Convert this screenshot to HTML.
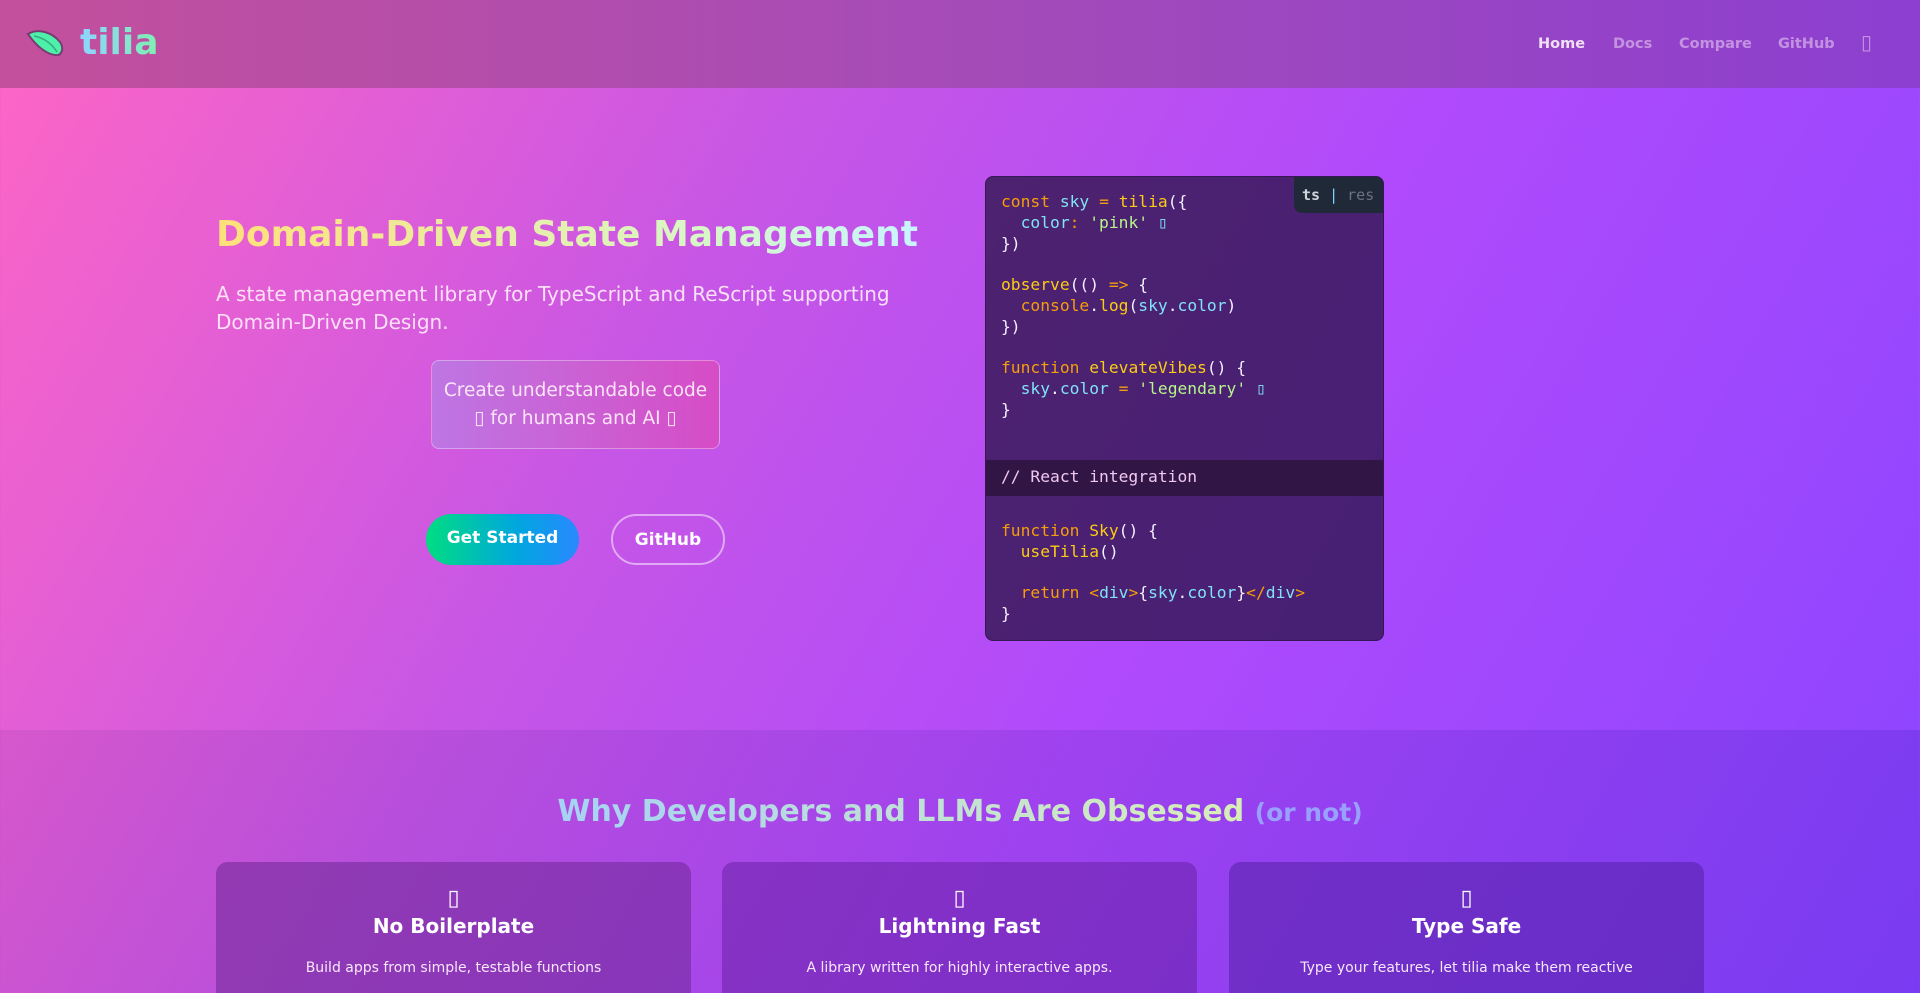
<!DOCTYPE html>
<html><head><meta charset="utf-8"><style>
*{margin:0;padding:0;box-sizing:border-box}
html,body{width:1920px;height:993px;overflow:hidden}
body{font-family:"DejaVu Sans","Liberation Sans",sans-serif;background:linear-gradient(120deg,#ff66c4 0%,#c656e6 35%,#b04afc 60%,#8a45ff 100%);position:relative;color:#fff}
header{position:absolute;left:0;top:0;width:1920px;height:88px;background:linear-gradient(90deg,#c3509c 0%,#a54bb8 50%,#8c3fd0 100%);}
.logo{position:absolute;left:26px;top:28px}
.brand{position:absolute;left:80px;top:22px;font-size:36px;font-weight:bold;background:linear-gradient(90deg,#8fd3ff,#7ff0b0);-webkit-background-clip:text;color:transparent}
nav a{position:absolute;top:36px;font-size:14.5px;font-weight:bold;color:rgba(230,200,240,.6);text-decoration:none}
h1{position:absolute;left:216px;top:214px;font-size:36px;font-weight:bold;white-space:nowrap;background:linear-gradient(90deg,#ffe07a,#d8f7c8 70%,#c8f4ff);-webkit-background-clip:text;color:transparent}
.sub{position:absolute;left:216px;top:280px;width:700px;font-size:20px;line-height:28px;color:rgba(255,235,250,.92)}
.box{position:absolute;left:431px;top:360px;width:289px;height:89px;border:1px solid rgba(255,255,255,.35);border-radius:8px;background:linear-gradient(90deg,rgba(180,130,230,.7),rgba(230,70,170,.55));text-align:center;font-size:18.5px;line-height:28px;padding-top:16px;color:rgba(255,240,250,.92)}
.b1{position:absolute;left:426px;top:514px;width:153px;height:51px;border-radius:26px;background:linear-gradient(90deg,#00dd80,#00a6e0 60%,#2a88ff);font-weight:bold;font-size:17px;text-align:center;line-height:48px}
.b2{position:absolute;left:611px;top:514px;width:114px;height:51px;border-radius:26px;border:2px solid rgba(255,255,255,.5);font-weight:bold;font-size:17px;text-align:center;line-height:48px}
.code{position:absolute;left:985px;top:176px;width:399px;height:465px;border-radius:8px;background:rgba(45,20,75,.78);border:1px solid rgba(20,10,40,.4);font-family:"DejaVu Sans Mono","Liberation Mono",monospace;font-size:16.3px;line-height:20.8px;overflow:hidden}
.code pre{font-family:inherit;padding:0 15px;white-space:pre;color:#f5f0ff}
.tab{position:absolute;right:0;top:0;width:89px;height:36px;background:#1f2937;border-bottom-left-radius:8px;font-size:15px;padding:8px 0 0 8px;color:#6b7280}
.band{position:absolute;left:0;top:283px;width:100%;height:36px;background:rgba(35,15,45,.65);color:#f0c8f0;padding:7px 15px}
.k{color:#f59e0b}.f{color:#facc15}.v{color:#7fe3f5}.s{color:#b6f58a}
.sec2{position:absolute;left:0;top:730px;width:1920px;height:263px;background:linear-gradient(120deg,rgba(120,40,140,.12),rgba(70,30,200,.25))}
h2{position:absolute;left:0;width:1920px;top:794px;text-align:center;font-size:30px;font-weight:bold}
h2 .g{background:linear-gradient(90deg,#a6d2f5,#d8eeb8);-webkit-background-clip:text;color:transparent}
h2 .n{font-size:25px;color:#9aa0ff}
.card{position:absolute;top:862px;width:475px;height:160px;border-radius:12px;background:rgba(100,30,150,.4);text-align:center}
.card .i{margin-top:24px;font-size:22px;height:28px}
.card h3{font-size:20px;margin-top:0}
.card p{font-size:14px;margin-top:22px;color:rgba(255,240,255,.95)}
</style></head><body>
<header>
<svg class="logo" width="40" height="36" viewBox="0 0 40 36"><path d="M2 6 C12 0 26 4 34 14 C38 20 36 26 32 27 C22 28 10 18 2 6Z" fill="#4cf0a8" stroke="#7a3a70" stroke-width="2"/><path d="M8 8 C18 10 26 16 31 24" stroke="#3aa880" stroke-width="1.5" fill="none"/></svg>
<div class="brand">tilia</div>
<nav><a style="left:1538px;color:#f0e0f5">Home</a><a style="left:1613px">Docs</a><a style="left:1679px">Compare</a><a style="left:1778px">GitHub</a><a style="left:1861px;top:30px;font-size:20px;font-weight:normal">&#9647;</a></nav>
</header>
<h1>Domain-Driven State Management</h1>
<div class="sub">A state management library for TypeScript and ReScript supporting Domain-Driven Design.</div>
<div class="box">Create understandable code<br>&#9647; for humans and AI &#9647;</div>
<div class="b1">Get Started</div>
<div class="b2">GitHub</div>
<div class="code">
<div class="tab"><b style="color:#d1d5db">ts</b> <span style="color:#7dd3fc">|</span> res</div>
<pre style="padding-top:15px"><span class="k">const</span> <span class="v">sky</span> <span class="k">=</span> <span class="f">tilia</span>({
  <span class="v">color</span><span class="k">:</span> <span class="s">'pink'</span> <span class="v">&#9647;</span>
})

<span class="f">observe</span>(() <span class="k">=&gt;</span> {
  <span class="k">console</span>.<span class="f">log</span>(<span class="v">sky</span>.<span class="v">color</span>)
})

<span class="k">function</span> <span class="f">elevateVibes</span>() {
  <span class="v">sky</span>.<span class="v">color</span> <span class="k">=</span> <span class="s">'legendary'</span> <span class="v">&#9647;</span>
}</pre>
<div class="band">// React integration</div>
<pre style="position:absolute;top:344px"><span class="k">function</span> <span class="f">Sky</span>() {
  <span class="f">useTilia</span>()

  <span class="k">return</span> <span class="k">&lt;</span><span class="v">div</span><span class="k">&gt;</span>{<span class="v">sky</span>.<span class="v">color</span>}<span class="k">&lt;/</span><span class="v">div</span><span class="k">&gt;</span>
}</pre>
</div>
<div class="sec2"></div>
<h2><span class="g">Why Developers and LLMs Are Obsessed</span> <span class="n">(or not)</span></h2>
<div class="card" style="left:216px;background:rgba(110,40,150,.55)"><div class="i">&#9647;</div><h3>No Boilerplate</h3><p>Build apps from simple, testable functions</p></div>
<div class="card" style="left:722px;background:rgba(100,30,160,.5)"><div class="i">&#9647;</div><h3>Lightning Fast</h3><p>A library written for highly interactive apps.</p></div>
<div class="card" style="left:1229px;background:rgba(80,30,160,.5)"><div class="i">&#9647;</div><h3>Type Safe</h3><p>Type your features, let tilia make them reactive</p></div>
</body></html>
